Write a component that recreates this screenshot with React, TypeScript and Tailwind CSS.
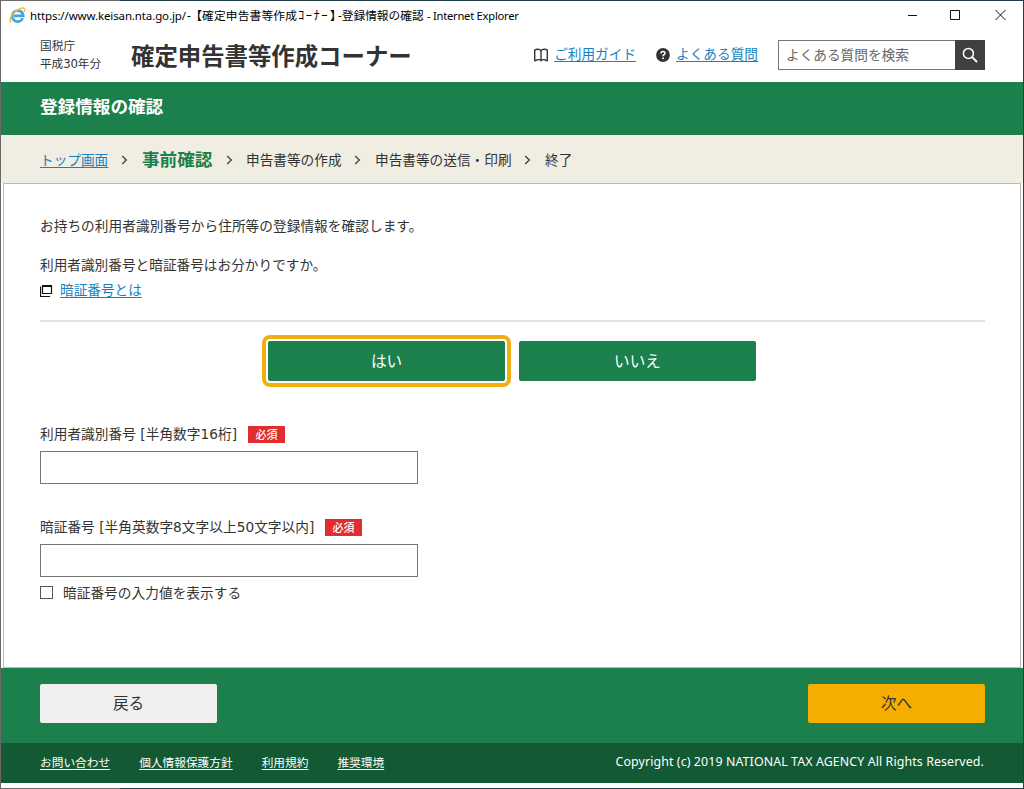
import { useState } from 'react';

const footerLinks = [
  { label: 'お問い合わせ', gap: 'mr-[29px]' },
  { label: '個人情報保護方針', gap: 'mr-[29px]' },
  { label: '利用規約', gap: 'mr-[29px]' },
  { label: '推奨環境', gap: '' },
];

function EdgeLine() {
  return (
    <div className="flex h-px">
      <div className="w-[120px] bg-[#6b6868]" />
      <div className="flex-1 bg-[#21404d]" />
    </div>
  );
}

function IeIcon() {
  return (
    <svg className="w-[17px] h-[17px]" viewBox="0 0 17 17" fill="none">
      <path d="M13.8 11.2A5.5 5.5 0 1 1 14.2 8.9H5" stroke="#42a5dc" strokeWidth="2.7" />
      <path
        d="M2.1 15.4C-.6 13.4 2.5 7.6 7 4.1 10.8 1.1 15.3-.2 15.7 2.2c.1.8-.2 1.7-.6 2.5"
        stroke="#f1bd38"
        strokeWidth="1.4"
      />
    </svg>
  );
}

function BookIcon() {
  return (
    <svg className="w-[14px] h-[14px] mt-px" viewBox="0 0 14 14" fill="none" stroke="#333" strokeWidth="1.4">
      <path d="M7 2.8C6.4 1.6 5.2 1.200 3.800 1.200 2.500 1.200 1.300 1.500.700 2v10.500h1.300c.2-1.200 4.400-1.200 5 0 .6-1.200 4.800-1.200 5 0h1.300V2c-.6-.5-1.800-.8-3.100-.8-1.400 0-2.600.4-3.200 1.600Zm0 0v9.700" />
    </svg>
  );
}

function HelpIcon() {
  return (
    <svg className="w-[14px] h-[14px]" viewBox="0 0 14 14" fill="none">
      <circle cx="7" cy="7" r="6.9" fill="#333" />
      <path d="M5 5.4c0-2.5 4-2.4 4-.2 0 1.5-1.9 1.5-1.9 3" stroke="#fff" strokeWidth="1.5" />
      <circle cx="7.1" cy="10.3" r="0.95" fill="#fff" />
    </svg>
  );
}

function WindowIcon() {
  return (
    <svg className="w-[13px] h-[13px]" viewBox="0 0 13 13" fill="none" stroke="#111">
      <path d="M2.5 1.5h9v8h-9z" strokeWidth="1.2" />
      <path d="M2 2h10" strokeWidth="2" />
      <path d="M.5 2.5v10H10" strokeWidth="1.2" />
    </svg>
  );
}

function Chevron() {
  return (
    <svg className="w-[7px] h-[10px] mt-px" viewBox="0 0 7 10" fill="none" stroke="#444" strokeWidth="1.4">
      <path d="M1.2 1 5.3 5 1.2 9" />
    </svg>
  );
}

function RequiredBadge() {
  return (
    <span className="w-[37px] h-[17px] bg-[#e02d2f] text-white text-[11px] font-medium leading-[17px] text-center font-['Noto_Sans_CJK_JP',sans-serif]">
      必須
    </span>
  );
}

export default function App() {
  const [userId, setUserId] = useState('');
  const [pin, setPin] = useState('');
  const [showPin, setShowPin] = useState(false);

  return (
    <div className="w-[1024px] h-[789px] overflow-hidden flex flex-col bg-white text-[#333] text-[13.67px] leading-[20px] whitespace-nowrap font-['Noto_Sans','Noto_Sans_CJK_JP',sans-serif]">
      <EdgeLine />
      <div className="flex-1 flex flex-col border-l border-l-[#6b6868] border-r border-r-[#21404d]">
        <div className="h-[29px] flex items-center pl-2 text-black text-[11.7px]">
          <IeIcon />
          <div className="ml-[4px] flex leading-[29px] h-[29px]">
            <span className="w-[157px] text-[11.5px] tracking-[-0.12px]">https://www.keisan.nta.go.jp/</span>
            <span className="w-[9px]">-</span>
            {/* half-width brackets keep the title tight, as the window caption does */}
            <span className="w-[102px] tracking-[0.2px] [font-feature-settings:'halt']">【確定申告書等作成</span>
            <span className="w-[32px] text-[12.5px] tracking-[1.5px]">ｺｰﾅｰ</span>
            <span className="w-[8px] [font-feature-settings:'halt']">】</span>
            <span className="w-[86px]">-登録情報の確認</span>
            <span className="ml-[3px] text-[11.2px] tracking-[-0.25px]">- Internet Explorer</span>
          </div>
          <svg className="w-[98px] h-[12px] ml-auto mr-[17px] mb-px" viewBox="0 0 98 12" fill="none" stroke="#111">
            <path d="M0 6.500h9" />
            <path d="M42.500 1.500h9v9h-9z" />
            <path d="m87.500 1 10 10m0-10-10 10" />
          </svg>
        </div>

        <header className="h-[51px] flex items-start pl-[39px] pr-[38px]">
          <div className="w-[91px] pt-[8px] text-[11.7px] leading-[17.5px] font-['DejaVu_Sans','Noto_Sans_CJK_JP',sans-serif]">
            <p>国税庁</p>
            <p className="tracking-[-0.1px]">平成30年分</p>
          </div>
          <h1 className="pt-[9px] text-[23.4px] leading-[34px] font-bold">確定申告書等作成コーナー</h1>
          <nav className="ml-auto flex items-center h-[48px] text-[#1a7fc0]">
            <BookIcon />
            <a className="ml-[6px] underline underline-offset-2">ご利用ガイド</a>
            <span className="ml-[20px] mt-px"><HelpIcon /></span>
            <a className="ml-[6px] underline underline-offset-2">よくある質問</a>
          </nav>
          <div className="ml-[20px] mt-[10px] flex w-[207px] h-[30px]">
            <input
              className="w-[177px] border border-[#777] border-r-0 pl-[7px] outline-none placeholder:text-[#666]"
              placeholder="よくある質問を検索"
            />
            <button className="w-[30px] bg-[#404040] flex items-center justify-center">
              <svg className="w-[16px] h-[16px]" viewBox="0 0 16 16" fill="none" stroke="#fff" strokeWidth="1.5">
                <circle cx="6.4" cy="6.4" r="5" />
                <path d="m10 10 5 5" strokeWidth="1.8" />
              </svg>
            </button>
          </div>
        </header>

        <div className="h-[53px] mt-px bg-[#1b804b] pl-[39px] text-white text-[17.6px] font-bold leading-[49px]">
          登録情報の確認
        </div>

        <div className="h-[48px] bg-[#f0eee3] pl-[39px] pt-px flex items-center">
          <a className="w-[81px] text-[#1a7fc0] underline underline-offset-2">トップ画面</a>
          <Chevron />
          <span className="w-[71px] ml-[14px] mr-[13px] text-[17.6px] font-bold text-[#1b804b] -mt-px">事前確認</span>
          <Chevron />
          <span className="w-[96px] ml-[13px] mr-[12px]">申告書等の作成</span>
          <Chevron />
          <span className="w-[137px] ml-[14px] mr-[12px]">申告書等の送信・印刷</span>
          <Chevron />
          <span className="ml-[14px]">終了</span>
        </div>

        <main className="h-[485px] ml-[2px] mr-[2px] border border-[#bdbcb0] pl-[36px] pr-[35px] pt-[32px]">
          <p className="tracking-[0.05px]">お持ちの利用者識別番号から住所等の登録情報を確認します。</p>
          <p className="mt-[19px]">利用者識別番号と暗証番号はお分かりですか。</p>
          <p className="mt-[5px] flex items-center">
            <WindowIcon />
            <a className="ml-[7px] text-[#1a7fc0] underline underline-offset-2">暗証番号とは</a>
          </p>

          <div className="mt-[20px] border-t-2 border-[#e2e2e2]" />

          <div className="mt-[19px] pl-[228px] flex gap-[14px] text-white text-[15.6px]">
            <button className="w-[237px] h-[40px] rounded-[2px] bg-[#1b804b] outline-4 outline-[#f0ae10] outline-offset-2">
              はい
            </button>
            <button className="w-[237px] h-[40px] rounded-[2px] bg-[#1b804b]">いいえ</button>
          </div>

          <label className="mt-[43px] flex items-center h-[20px] font-['DejaVu_Sans','Noto_Sans_CJK_JP',sans-serif]">
            <span className="w-[208px] tracking-[0.05px]">利用者識別番号 [半角数字16桁]</span>
            <RequiredBadge />
          </label>
          <input
            className="block mt-[7px] w-[378px] h-[33px] border border-[#767676] px-2 outline-none"
            value={userId}
            onChange={(e) => setUserId(e.target.value)}
          />

          <label className="mt-[33px] flex items-center h-[20px] font-['DejaVu_Sans','Noto_Sans_CJK_JP',sans-serif]">
            <span className="w-[285px] tracking-[0.05px]">暗証番号 [半角英数字8文字以上50文字以内]</span>
            <RequiredBadge />
          </label>
          <input
            className="block mt-[7px] w-[378px] h-[33px] border border-[#767676] px-2 outline-none"
            type={showPin ? 'text' : 'password'}
            value={pin}
            onChange={(e) => setPin(e.target.value)}
          />
          <label className="mt-[6px] flex items-center h-[20px]">
            <input
              type="checkbox"
              className="appearance-none w-[13px] h-[13px] -mt-px border border-[#555] checked:bg-[#1b804b]"
              checked={showPin}
              onChange={(e) => setShowPin(e.target.checked)}
            />
            <span className="ml-[10px] tracking-[0.05px]">暗証番号の入力値を表示する</span>
          </label>
        </main>

        <div className="h-[75px] bg-[#1b804b] pt-[16px] pl-[39px] pr-[38px] flex items-start justify-between text-[15.6px]">
          <button className="w-[177px] h-[39px] rounded-[2px] bg-[#efefef] pb-px">戻る</button>
          <button className="w-[177px] h-[39px] rounded-[2px] bg-[#f4ae00] pb-px">次へ</button>
        </div>

        <footer className="h-[40px] bg-[#125934] pl-[39px] pr-[39px] flex text-white text-[11.7px] leading-[38px]">
          {footerLinks.map((link) => (
            <a key={link.label} className={`underline underline-offset-2 ${link.gap}`}>
              {link.label}
            </a>
          ))}
          <span className="ml-auto text-[12.4px] tracking-[0.1px]">
            Copyright (c) 2019 NATIONAL TAX AGENCY All Rights Reserved.
          </span>
        </footer>
      </div>
      <EdgeLine />
    </div>
  );
}
